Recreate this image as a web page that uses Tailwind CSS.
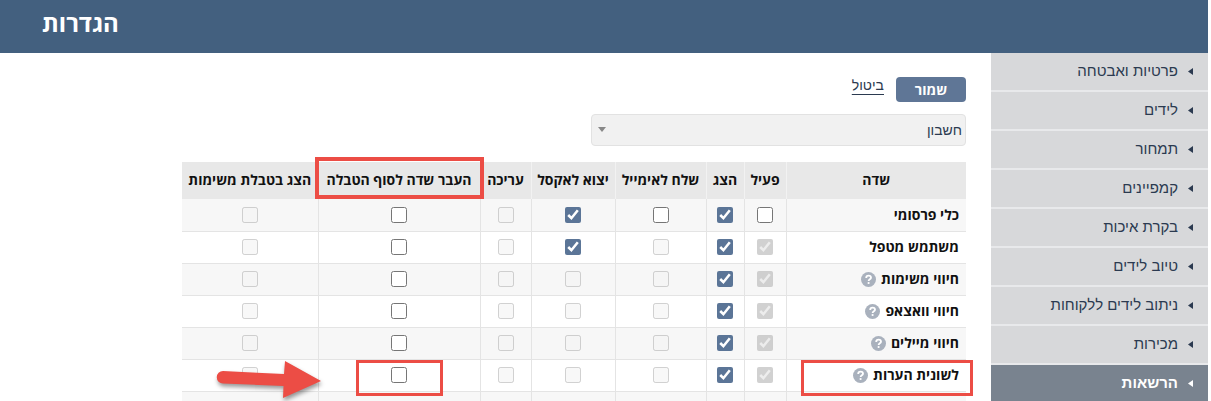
<!DOCTYPE html>
<html lang="he" dir="rtl">
  <head>
    <meta charset="UTF-8" />
    <meta name="viewport" content="width=device-width, initial-scale=1.0" />
    <title>הגדרות</title>
    <script src="https://cdn.jsdelivr.net/npm/@tailwindcss/browser@4"></script>
  </head>
  <body class="bg-white pr-[3px] h-screen overflow-hidden flex flex-col font-['Open_Sans','Noto_Sans',sans-serif] text-[#222]">
    <!-- Header -->
    <header class="h-[53px] shrink-0 bg-[#43607f] flex items-center justify-end px-[42px] pb-2">
      <h1 class="text-2xl font-bold text-white">הגדרות</h1>
    </header>

    <div class="flex flex-1 min-h-0">
      <!-- Sidebar -->
      <nav class="w-[217px] shrink-0 bg-[#d7d8da] font-['Liberation_Sans',sans-serif] text-[15px] text-[#2b3a50]">
        <ul class="[&>li]:border-b-2 [&>li]:border-[#e8e9eb] [&_a]:flex [&_a]:items-center [&_a]:gap-[10px] [&_a]:h-[37px] [&_a]:pr-[15px] [&_svg]:w-[5px] [&_svg]:h-[7px]">
          <li><a href="#"><svg viewBox="0 0 5 7" fill="currentColor"><path d="M5 0v7L0 3.5z" /></svg>פרטיות ואבטחה</a></li>
          <li><a href="#"><svg viewBox="0 0 5 7" fill="currentColor"><path d="M5 0v7L0 3.5z" /></svg>לידים</a></li>
          <li><a href="#"><svg viewBox="0 0 5 7" fill="currentColor"><path d="M5 0v7L0 3.5z" /></svg>תמחור</a></li>
          <li><a href="#"><svg viewBox="0 0 5 7" fill="currentColor"><path d="M5 0v7L0 3.5z" /></svg>קמפיינים</a></li>
          <li><a href="#"><svg viewBox="0 0 5 7" fill="currentColor"><path d="M5 0v7L0 3.5z" /></svg>בקרת איכות</a></li>
          <li><a href="#"><svg viewBox="0 0 5 7" fill="currentColor"><path d="M5 0v7L0 3.5z" /></svg>טיוב לידים</a></li>
          <li><a href="#"><svg viewBox="0 0 5 7" fill="currentColor"><path d="M5 0v7L0 3.5z" /></svg>ניתוב לידים ללקוחות</a></li>
          <li><a href="#"><svg viewBox="0 0 5 7" fill="currentColor"><path d="M5 0v7L0 3.5z" /></svg>מכירות</a></li>
          <li class="bg-[#79838f] text-white font-bold"><a href="#"><svg viewBox="0 0 5 7" fill="currentColor"><path d="M5 0v7L0 3.5z" /></svg>הרשאות</a></li>
        </ul>
      </nav>

      <!-- Main Content -->
      <main class="flex-1 pr-[25px] pt-6">
        <div class="flex items-start gap-3">
          <button type="button" class="w-[70px] h-[25px] rounded bg-[#5f7696] text-white text-sm leading-5 font-bold">שמור</button>
          <a href="#" class="font-['Liberation_Sans',sans-serif] text-sm leading-4 underline underline-offset-4 text-[#2b3a50]">ביטול</a>
        </div>

        <div class="relative w-[375px] mt-3">
          <select aria-label="סוג" class="appearance-none w-full h-8 px-[3px] rounded border border-[#e2e2e2] bg-[#f1f1f1] font-['Liberation_Sans',sans-serif] text-sm text-[#2b3a50]">
            <option>חשבון</option>
          </select>
          <svg class="absolute left-[7px] top-[13px] w-2 h-[5px] text-[#888]" viewBox="0 0 8 5" fill="currentColor"><path d="M0 0h8L4 5z" /></svg>
        </div>

        <!-- Permissions table -->
        <table class="w-[784px] mt-4 table-fixed border-collapse text-sm leading-5 font-bold text-[#111] [&_tbody_tr]:h-8 [&_tbody_tr]:border-b [&_tbody_tr]:border-[#e4e4e4] [&_tbody_tr:nth-child(odd)]:bg-[#f7f7f7] [&_td]:border-l [&_td]:border-[#e4e4e4] [&_td:last-child]:border-l-0 [&_td]:text-center [&_tbody_th]:border-l [&_tbody_th]:border-[#e4e4e4] [&_tbody_th]:text-right [&_tbody_th]:pr-[7px] [&_input]:block [&_input]:mx-auto [&_input]:w-4 [&_input]:h-4 [&_input]:accent-[#5b7597]">
          <colgroup>
            <col class="w-[180px]" />
            <col class="w-[42px]" />
            <col class="w-[38px]" />
            <col class="w-[91px]" />
            <col class="w-[84px]" />
            <col class="w-[51px]" />
            <col class="w-[162px]" />
            <col class="w-[136px]" />
          </colgroup>
          <thead>
            <tr class="h-[37px] bg-[#e8e8e8] whitespace-nowrap [&_th]:border-l [&_th]:border-[#f2f2f2] [&_th]:pb-[2px] [&_th:last-child]:border-l-0">
              <th>שדה</th>
              <th id="active">פעיל</th>
              <th id="show">הצג</th>
              <th id="mail">שלח לאימייל</th>
              <th id="excel">יצוא לאקסל</th>
              <th id="edit">עריכה</th>
              <th id="end" class="relative">
                העבר שדה לסוף הטבלה
                <span class="absolute -inset-x-1 -top-[5px] bottom-0 border-4 border-[#ec4d45]"></span>
              </th>
              <th id="tasks">הצג בטבלת משימות</th>
            </tr>
          </thead>
          <tbody>
            <tr>
              <th id="row1">כלי פרסומי</th>
              <td><input type="checkbox" aria-labelledby="row1 active" /></td>
              <td><input type="checkbox" aria-labelledby="row1 show" checked /></td>
              <td><input type="checkbox" aria-labelledby="row1 mail" /></td>
              <td><input type="checkbox" aria-labelledby="row1 excel" checked /></td>
              <td><input type="checkbox" aria-labelledby="row1 edit" disabled /></td>
              <td><input type="checkbox" aria-labelledby="row1 end" /></td>
              <td><input type="checkbox" aria-labelledby="row1 tasks" disabled /></td>
            </tr>
            <tr>
              <th id="row2">משתמש מטפל</th>
              <td><input type="checkbox" aria-labelledby="row2 active" checked disabled /></td>
              <td><input type="checkbox" aria-labelledby="row2 show" checked /></td>
              <td><input type="checkbox" aria-labelledby="row2 mail" disabled /></td>
              <td><input type="checkbox" aria-labelledby="row2 excel" checked /></td>
              <td><input type="checkbox" aria-labelledby="row2 edit" disabled /></td>
              <td><input type="checkbox" aria-labelledby="row2 end" /></td>
              <td><input type="checkbox" aria-labelledby="row2 tasks" disabled /></td>
            </tr>
            <tr>
              <th id="row3">
                <div class="flex items-center gap-[5px]">
                  חיווי משימות
                  <svg class="w-[15px] h-[15px]" viewBox="0 0 15 15" fill="none"><circle cx="7.5" cy="7.5" r="7.5" fill="#a9b1bd" /><path d="M5.2 6C5.2 4.400 6.200 3.700 7.600 3.700C9 3.700 10 4.500 10 5.700C10 7.200 7.600 7.200 7.600 8.900" stroke="#fff" stroke-width="1.800" /><circle cx="7.600" cy="11" r="1.100" fill="#fff" /></svg>
                </div>
              </th>
              <td><input type="checkbox" aria-labelledby="row3 active" checked disabled /></td>
              <td><input type="checkbox" aria-labelledby="row3 show" checked /></td>
              <td><input type="checkbox" aria-labelledby="row3 mail" disabled /></td>
              <td><input type="checkbox" aria-labelledby="row3 excel" disabled /></td>
              <td><input type="checkbox" aria-labelledby="row3 edit" disabled /></td>
              <td><input type="checkbox" aria-labelledby="row3 end" /></td>
              <td><input type="checkbox" aria-labelledby="row3 tasks" disabled /></td>
            </tr>
            <tr>
              <th id="row4">
                <div class="flex items-center gap-[5px]">
                  חיווי וואצאפ
                  <svg class="w-[15px] h-[15px]" viewBox="0 0 15 15" fill="none"><circle cx="7.5" cy="7.5" r="7.5" fill="#a9b1bd" /><path d="M5.2 6C5.2 4.400 6.200 3.700 7.600 3.700C9 3.700 10 4.500 10 5.700C10 7.200 7.600 7.200 7.600 8.900" stroke="#fff" stroke-width="1.800" /><circle cx="7.600" cy="11" r="1.100" fill="#fff" /></svg>
                </div>
              </th>
              <td><input type="checkbox" aria-labelledby="row4 active" checked disabled /></td>
              <td><input type="checkbox" aria-labelledby="row4 show" checked /></td>
              <td><input type="checkbox" aria-labelledby="row4 mail" disabled /></td>
              <td><input type="checkbox" aria-labelledby="row4 excel" disabled /></td>
              <td><input type="checkbox" aria-labelledby="row4 edit" disabled /></td>
              <td><input type="checkbox" aria-labelledby="row4 end" /></td>
              <td><input type="checkbox" aria-labelledby="row4 tasks" disabled /></td>
            </tr>
            <tr>
              <th id="row5">
                <div class="flex items-center gap-[5px]">
                  חיווי מיילים
                  <svg class="w-[15px] h-[15px]" viewBox="0 0 15 15" fill="none"><circle cx="7.5" cy="7.5" r="7.5" fill="#a9b1bd" /><path d="M5.2 6C5.2 4.400 6.200 3.700 7.600 3.700C9 3.700 10 4.500 10 5.700C10 7.200 7.600 7.200 7.600 8.900" stroke="#fff" stroke-width="1.800" /><circle cx="7.600" cy="11" r="1.100" fill="#fff" /></svg>
                </div>
              </th>
              <td><input type="checkbox" aria-labelledby="row5 active" checked disabled /></td>
              <td><input type="checkbox" aria-labelledby="row5 show" checked /></td>
              <td><input type="checkbox" aria-labelledby="row5 mail" disabled /></td>
              <td><input type="checkbox" aria-labelledby="row5 excel" disabled /></td>
              <td><input type="checkbox" aria-labelledby="row5 edit" disabled /></td>
              <td><input type="checkbox" aria-labelledby="row5 end" /></td>
              <td><input type="checkbox" aria-labelledby="row5 tasks" disabled /></td>
            </tr>
            <tr>
              <th id="row6" class="relative">
                <div class="flex items-center gap-[5px]">
                  לשונית הערות
                  <svg class="w-[15px] h-[15px]" viewBox="0 0 15 15" fill="none"><circle cx="7.5" cy="7.5" r="7.5" fill="#a9b1bd" /><path d="M5.2 6C5.2 4.400 6.200 3.700 7.600 3.700C9 3.700 10 4.500 10 5.700C10 7.200 7.600 7.200 7.600 8.900" stroke="#fff" stroke-width="1.800" /><circle cx="7.600" cy="11" r="1.100" fill="#fff" /></svg>
                </div>
                <span class="absolute -right-[7px] left-[14px] top-0 h-9 border-[3px] border-[#ec4d45]"></span>
              </th>
              <td><input type="checkbox" aria-labelledby="row6 active" checked disabled /></td>
              <td><input type="checkbox" aria-labelledby="row6 show" checked /></td>
              <td><input type="checkbox" aria-labelledby="row6 mail" disabled /></td>
              <td><input type="checkbox" aria-labelledby="row6 excel" disabled /></td>
              <td><input type="checkbox" aria-labelledby="row6 edit" disabled /></td>
              <td class="relative">
                <input type="checkbox" aria-labelledby="row6 end" />
                <span class="absolute inset-x-[37px] top-0 h-9 border-[3px] border-[#ec4d45]"></span>
              </td>
              <td class="relative">
                <input type="checkbox" aria-labelledby="row6 tasks" disabled />
                <!-- Pointer arrow -->
                <svg class="absolute left-[34px] top-0 w-[108px] h-[42px] drop-shadow-[1px_3px_2px_rgba(0,0,0,0.4)]" viewBox="0 0 108 42" fill="#ec4d45"><path d="M7 11L68 14L69 1L105 21L67 38L67.500 26L7 23.500A6.200 6.200 0 0 1 7 11z" /></svg>
              </td>
            </tr>
            <tr>
              <th></th>
              <td></td>
              <td></td>
              <td></td>
              <td></td>
              <td></td>
              <td></td>
              <td></td>
            </tr>
          </tbody>
        </table>
      </main>
    </div>
  </body>
</html>
